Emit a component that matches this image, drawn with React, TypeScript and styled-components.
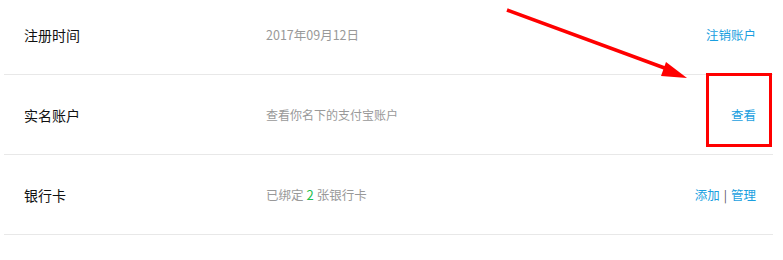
import styled, { createGlobalStyle } from "styled-components";

const GlobalStyle = createGlobalStyle`
  html, body {
    margin: 0;
    padding: 0;
    background: #fff;
  }
  body {
    font-family: "Noto Sans CJK SC", "Noto Sans", sans-serif;
    overflow: hidden;
  }
`;

const Page = styled.div`
  position: relative;
  width: 783px;
  height: 260px;
  overflow: hidden;
`;

const List = styled.div`
  margin: -5px 10px 0 4px;
`;

const Row = styled.div`
  display: grid;
  grid-template-columns: 242px 1fr auto;
  align-items: center;
  height: 79px;
  padding: 0 17px 0 20px;
  border-bottom: 1px solid #e8e8e8;
`;

const Label = styled.div`
  font-size: 14px;
  color: #111;
`;

const Value = styled.div<{ $size?: number }>`
  font-size: ${({ $size }) => $size ?? 12.5}px;
  color: #999;
`;

const Count = styled.span`
  color: #1fbf4f;
  font-size: 13px;
  margin: 0 3px;
`;

const Actions = styled.div`
  display: flex;
  align-items: center;
  gap: 4px;
  font-size: 12.5px;
  color: #1a9fe0;
`;

const Link = styled.a`
  color: inherit;
  text-decoration: none;
  cursor: pointer;
`;

const Divider = styled.span`
  color: #555;
  font-size: 12px;
`;

const Highlight = styled.div`
  position: absolute;
  left: 706px;
  top: 73px;
  width: 60px;
  height: 68px;
  border: 3px solid #ff0000;
`;

const Arrow = styled.svg`
  position: absolute;
  left: 0;
  top: 0;
  pointer-events: none;
`;

export default function App() {
  return (
    <Page>
      <GlobalStyle />
      <List>
        <Row>
          <Label>注册时间</Label>
          <Value>2017年09月12日</Value>
          <Actions>
            <Link>注销账户</Link>
          </Actions>
        </Row>
        <Row>
          <Label>实名账户</Label>
          <Value $size={12}>查看你名下的支付宝账户</Value>
          <Actions>
            <Link>查看</Link>
          </Actions>
        </Row>
        <Row>
          <Label>银行卡</Label>
          <Value>
            已绑定<Count>2</Count>张银行卡
          </Value>
          <Actions>
            <Link>添加</Link>
            <Divider>|</Divider>
            <Link>管理</Link>
          </Actions>
        </Row>
      </List>
      <Highlight />
      <Arrow width="783" height="260" viewBox="0 0 783 260">
        <line x1="507" y1="10" x2="670" y2="70" stroke="#ff0000" strokeWidth="3.5" />
        <polygon points="687,78 666,62 661,76" fill="#ff0000" />
      </Arrow>
    </Page>
  );
}
